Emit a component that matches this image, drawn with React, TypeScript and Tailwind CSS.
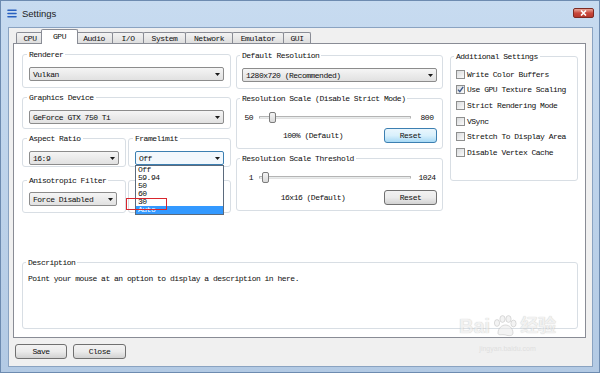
import React from "react";

const txt = "font-['Liberation_Mono',monospace] text-[8px] leading-[9px] tracking-[-0.5px] text-[#0e0e0e]";

function Arrow() {
  return (
    <svg width="5" height="3" viewBox="0 0 5 3" className="shrink-0">
      <path d="M0 0h5L2.5 3z" fill="#1a1a1a" />
    </svg>
  );
}

function Combo({ value, focused = false, children }: { value: string; focused?: boolean; children?: React.ReactNode }) {
  const look = focused
    ? "border-[#3c7fb1] bg-[#f2f8fd]"
    : "border-[#8c8c8c] bg-linear-to-b from-[#f5f5f5] to-[#e1e1e1]";
  return (
    <div className={`relative h-[14px] flex items-center justify-between pl-[3px] pr-[3px] rounded-[2px] border ${look}`}>
      <span className="whitespace-nowrap">{value}</span>
      <Arrow />
      {children}
    </div>
  );
}

function Group({ title, className = "", children }: { title?: string; className?: string; children?: React.ReactNode }) {
  return (
    <fieldset className={`border border-[#d8dee4] rounded-[3px] ${className}`}>
      {title ? (
        <legend className="-ml-[2px] px-[2px] leading-[9px] whitespace-nowrap">{title}</legend>
      ) : (
        <legend className="w-0 h-[9px] p-0" />
      )}
      {children}
    </fieldset>
  );
}

function WinButton({ label, focused = false, className = "" }: { label: string; focused?: boolean; className?: string }) {
  const look = focused
    ? "border-[#3c7fb1] bg-linear-to-b from-[#eaf6fd] via-[#d9f0fc] to-[#a7d9f5]"
    : "border-[#707070] bg-linear-to-b from-[#f2f2f2] via-[#ebebeb] to-[#d2d2d2]";
  return (
    <div className={`h-[15px] flex items-center justify-center rounded-[3px] border ${look} ${className}`}>
      {label}
    </div>
  );
}

function Slider({ left, right, thumb }: { left: string; right: string; thumb: string }) {
  return (
    <div className="flex items-center h-[12px] pl-[1px]">
      <span className="w-[10px] text-right">{left}</span>
      <div className="relative flex-1 ml-[6px] h-[3px] border border-[#b4b4b4] border-b-[#e2e2e2] bg-[#e9ecec] rounded-[1px]">
        <div className={`absolute top-[-5px] w-[7px] h-[11px] rounded-[2px] border border-[#7c7c7c] bg-linear-to-b from-[#f4f4f4] to-[#dadada] ${thumb}`} />
      </div>
      <span className="w-[20px] ml-[6px] text-center">{right}</span>
    </div>
  );
}

function Check({ label, checked = false, h }: { label: string; checked?: boolean; h: string }) {
  return (
    <div className={`flex items-center ${h}`}>
      <span className="relative w-[9px] h-[9px] border border-[#8e8f8f] bg-linear-to-br from-[#d9dbdd] to-[#fbfbfb]">
        {checked && (
          <svg width="9" height="9" viewBox="0 0 9 9" className="absolute left-[-1px] top-[-1px]">
            <path d="M2 4.6l1.8 2L7.2 1.8" fill="none" stroke="#3d5a8c" strokeWidth="1.4" />
          </svg>
        )}
      </span>
      <span className="ml-[2px] whitespace-nowrap">{label}</span>
    </div>
  );
}

const tabs = [
  { name: "CPU", w: "w-[28px]" },
  { name: "GPU", w: "w-[37px]" },
  { name: "Audio", w: "w-[38px]" },
  { name: "I/O", w: "w-[32px]" },
  { name: "System", w: "w-[43px]" },
  { name: "Network", w: "w-[48px]" },
  { name: "Emulator", w: "w-[52px]" },
  { name: "GUI", w: "w-[28px]" },
];

const frameOptions = ["Off", "59.94", "50", "60", "30", "Auto"];

export default function App() {
  return (
    <div className={`relative w-[600px] h-[373px] overflow-hidden flex flex-col border border-[#6d8bb0] bg-linear-to-b from-[#c7dbf0] to-[#b3cae4] ${txt}`}>
      {/* title bar */}
      <div className="h-[26px] shrink-0 flex items-start">
        <svg width="10" height="9" viewBox="0 0 10 9" className="ml-[6px] mt-[8px]">
          <path d="M1 1.2h8M1 4.5h8M1 7.8h8" stroke="#2860c0" strokeWidth="1.6" strokeLinecap="round" />
        </svg>
        <span className="ml-[5px] mt-[7px] font-['Liberation_Sans',sans-serif] text-[9.5px] leading-[12px] tracking-normal text-[#1c1c1c]">
          Settings
        </span>
        <div className="ml-auto mr-[5px] mt-[7px] w-[21px] h-[10px] flex items-center justify-center rounded-[2px] border border-[#7e2a22] bg-linear-to-b from-[#e8a79c] via-[#c9473b] to-[#b5382c]">
          <svg width="7" height="6" viewBox="0 0 7 6">
            <path d="M1 0.5l5 5M6 0.5l-5 5" stroke="#ffffff" strokeWidth="1.6" />
          </svg>
        </div>
      </div>

      {/* client area */}
      <div className="ml-[7px] mr-[6px] mb-[5px] flex-1 flex flex-col bg-[#f0f0f0] border border-[#8aa3c1] pl-[4px] pr-[6px] pt-[1px] pb-[7px]">
        {/* tabs */}
        <div className="h-[14px] flex items-end pl-[3px]">
          {tabs.map((t, i) =>
            t.name === "GPU" ? (
              <div
                key={t.name}
                className={`relative z-10 -ml-[3px] -mr-[2px] -mb-px h-[15px] ${t.w} flex items-center justify-center pb-[1px] rounded-t-[2px] border border-b-0 border-[#898c95] bg-white`}
              >
                {t.name}
              </div>
            ) : (
              <div
                key={t.name}
                className={`${i > 0 ? "-ml-px" : ""} h-[11px] ${t.w} flex items-center justify-center rounded-t-[2px] border border-b-0 border-[#898c95] bg-linear-to-b from-[#f3f3f3] to-[#dedede]`}
              >
                {t.name}
              </div>
            )
          )}
        </div>

        {/* tab pane */}
        <div className="flex-1 flex flex-col bg-white border border-[#898c95] pt-[6px] pl-[8px]">
          <div className="flex items-start">
            {/* left column */}
            <div className="w-[209px] flex flex-col">
              <Group title="Renderer" className="px-[6px] pt-[8px] pb-[6px]">
                <Combo value="Vulkan" />
              </Group>
              <Group title="Graphics Device" className="mt-[5px] px-[6px] pt-[8px] pb-[4px]">
                <Combo value="GeForce GTX 750 Ti" />
              </Group>
              <div className="mt-[5px] flex gap-[2px]">
                <Group title="Aspect Ratio" className="w-[104px] px-[6px] pt-[8px] pb-[1px]">
                  <Combo value="16:9" />
                </Group>
                <Group title="Framelimit" className="w-[103px] px-[6px] pt-[8px] pb-[1px]">
                  <Combo value="Off" focused>
                    <div className="absolute z-20 left-[-1px] right-[-1px] top-[13px] border border-[#5b6a7c] bg-white">
                      {frameOptions.map((o) => (
                        <div
                          key={o}
                          className={`h-[8px] leading-[8px] pl-[2px] ${o === "Auto" ? "bg-[#3399ff] text-white" : ""}`}
                        >
                          {o}
                        </div>
                      ))}
                      <div className="absolute left-[-10px] top-[32px] w-[41px] h-[12px] border-[1.5px] border-[#d8262d]" />
                    </div>
                  </Combo>
                </Group>
              </div>
              <div className="mt-[9px] flex gap-[2px]">
                <Group title="Anisotropic Filter" className="w-[104px] pl-[6px] pr-[8px] pt-[7px] pb-[6px]">
                  <Combo value="Force Disabled" />
                </Group>
                {/* group hidden behind the open list */}
                <Group className="w-[103px] px-[6px] pt-[7px] pb-[6px]">
                  <div className="h-[14px]" />
                </Group>
              </div>
            </div>

            {/* middle column */}
            <div className="ml-[5px] mt-[1px] w-[207px] flex flex-col">
              <Group title="Default Resolution" className="px-[5px] pt-[8px] pb-[6px]">
                <Combo value="1280x720 (Recommended)" />
              </Group>
              <Group title="Resolution Scale (Disable Strict Mode)" className="mt-[5px] px-[5px] pt-[8px] pb-[5px]">
                <Slider left="50" right="800" thumb="left-[9px]" />
                <div className="mt-[5px] flex items-center">
                  <span className="flex-1 text-center">100% (Default)</span>
                  <WinButton label="Reset" focused className="w-[53px]" />
                </div>
              </Group>
              <Group title="Resolution Scale Threshold" className="mt-[5px] px-[5px] pt-[8px] pb-[5px]">
                <Slider left="1" right="1024" thumb="left-[2px]" />
                <div className="mt-[7px] flex items-center">
                  <span className="flex-1 text-center">16x16 (Default)</span>
                  <WinButton label="Reset" className="w-[53px]" />
                </div>
              </Group>
            </div>

            {/* right column */}
            <div className="ml-[7px] mt-[2px] w-[128px]">
              <Group title="Additional Settings" className="pl-[5px] pt-[5px] pb-[20px]">
                <Check label="Write Color Buffers" h="h-[16px]" />
                <Check label="Use GPU Texture Scaling" checked h="h-[15px]" />
                <Check label="Strict Rendering Mode" h="h-[16px]" />
                <Check label="VSync" h="h-[16px]" />
                <Check label="Stretch To Display Area" h="h-[15px]" />
                <Check label="Disable Vertex Cache" h="h-[16px]" />
              </Group>
            </div>
          </div>

          {/* description */}
          <Group title="Description" className="mt-[45px] w-[556px] h-[71px] pl-[5px] pt-[7px]">
            <div>Point your mouse at an option to display a description in here.</div>
          </Group>
        </div>

        {/* bottom buttons */}
        <div className="mt-[6px] ml-[2px] flex gap-[6px]">
          <WinButton label="Save" className="w-[52px]" />
          <WinButton label="Close" className="w-[53px]" />
        </div>
      </div>

      {/* watermark */}
      <div className="absolute left-[458px] top-[314px] flex flex-col items-center opacity-60 pointer-events-none">
        <div className="flex items-center font-['Liberation_Sans','Noto_Sans_CJK_SC',sans-serif] text-[20px] leading-[22px] tracking-normal font-bold text-[#e9e9e9] [text-shadow:0_0_1px_#9a9a9a]">
          <span>Bai</span>
          <svg width="28" height="22" viewBox="0 0 28 22" className="mx-[1px]">
            <g fill="#ececec" stroke="#a0a0a0" strokeWidth="0.6">
              <ellipse cx="6" cy="8" rx="2.6" ry="3.4" />
              <ellipse cx="11.5" cy="4" rx="2.6" ry="3.4" />
              <ellipse cx="17.5" cy="4" rx="2.6" ry="3.4" />
              <ellipse cx="22.5" cy="8.5" rx="2.6" ry="3.4" />
              <path d="M7 18c0-5 4-8 7.5-8S22 13 22 18c0 3-4 3-7.5 2S7 21 7 18z" />
            </g>
          </svg>
          <span className="text-[18px]">经验</span>
        </div>
        <div className="mt-[8px] font-['Liberation_Sans',sans-serif] text-[7px] leading-[8px] tracking-normal text-[#d4d4d4]">
          jingyan.baidu.com
        </div>
      </div>
    </div>
  );
}
